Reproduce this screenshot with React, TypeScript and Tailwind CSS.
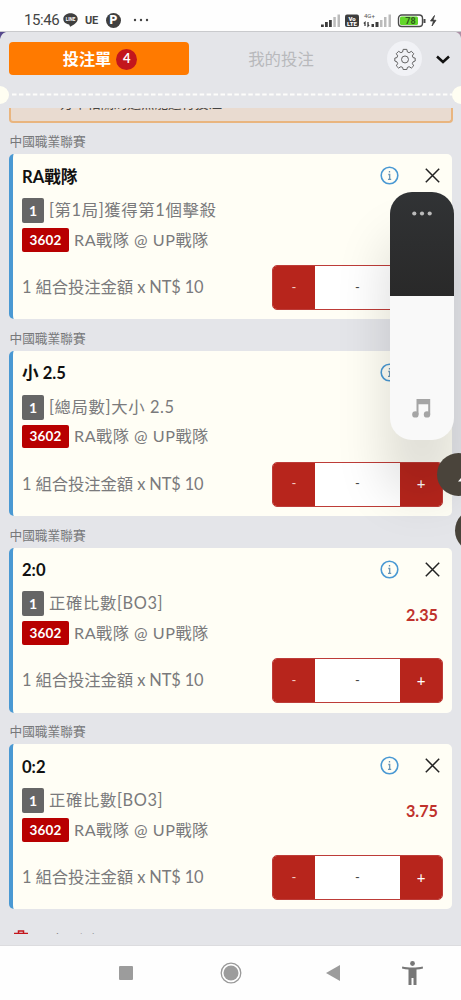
import { useState } from 'react'

interface Bet {
  id: number
  pick: string
  market: string
  odds?: string
}

const league = '中國職業聯賽'

const bets: Bet[] = [
  { id: 1, pick: 'RA戰隊', market: '[第1局]獲得第1個擊殺' },
  { id: 2, pick: '小 2.5', market: '[總局數]大小 2.5' },
  { id: 3, pick: '2:0', market: '正確比數[BO3]', odds: '2.35' },
  { id: 4, pick: '0:2', market: '正確比數[BO3]', odds: '3.75' },
]

function StatusBar() {
  return (
    <div className="flex h-8 shrink-0 items-center border-b border-[#c9cacd] bg-[#fefefe] pl-[24px] pt-[9px] font-['Roboto','Noto_Sans_CJK_TC',sans-serif] text-[#444]">
      <span className="w-[36px] text-[15px] leading-none tracking-[-0.4px]">15:46</span>
      <svg className="ml-[3px] h-[14px] w-[15px]" viewBox="0 0 15 14">
        <path d="M7.5 0.3C3.4 0.3 0.3 2.8 0.3 6c0 2.9 2.5 5 5.8 5.5L7.2 13.8C10.5 12 14.7 9.5 14.7 6c0-3.2-3.1-5.7-7.2-5.7z" fill="#3f3f3f" />
        <text x="7.5" y="7.8" textAnchor="middle" fontSize="4.5" fontWeight="700" fill="#fff">LINE</text>
      </svg>
      <span className="ml-[7px] w-[15px] text-[11px] font-bold leading-none tracking-[-0.3px]">UE</span>
      <span className="ml-[6px] flex h-[15px] w-[15px] items-center justify-center rounded-full bg-[#3f3f3f] text-[12px] font-black leading-none text-white">P</span>
      <svg className="ml-[12px] h-[4px] w-[16px]" viewBox="0 0 16 4" fill="#444">
        <circle cx="2" cy="2" r="1.2" />
        <circle cx="8" cy="2" r="1.2" />
        <circle cx="14" cy="2" r="1.2" />
      </svg>
      <svg className="ml-[171px] h-[16px] w-[120px]" viewBox="0 -2 120 16">
        <g fill="#3d3d3d">
          <rect x="1" y="10.5" width="2.8" height="2.5" />
          <rect x="5" y="8" width="2.8" height="5" />
          <rect x="9" y="6" width="2.8" height="7" />
        </g>
        <rect x="13.3" y="3" width="2.5" height="10" fill="#bbb" />
        <rect x="17.5" y="0.5" width="2.5" height="12.5" fill="#bbb" />
        <rect x="25" y="0.5" width="14" height="12.5" rx="2" fill="#3d3d3d" />
        <text x="32" y="6.5" textAnchor="middle" fontSize="6" fontWeight="900" fill="#fff">Vo</text>
        <text x="32" y="12.3" textAnchor="middle" fontSize="6" fontWeight="900" fill="#fff">LTE</text>
        <text x="44" y="4" fontSize="6" fill="#555">4G+</text>
        <path d="M45 12V8.500l-1.200 1M48 8v4l1.200-1" stroke="#3d3d3d" fill="none" strokeWidth="1.3" />
        <rect x="51.5" y="10" width="2.5" height="3" fill="#3d3d3d" />
        <rect x="55.5" y="8" width="3" height="5" fill="#3d3d3d" />
        <rect x="60" y="6" width="2.5" height="7" fill="#bbb" />
        <rect x="64" y="3" width="2.5" height="10" fill="#bbb" />
        <rect x="68.5" y="0.5" width="2.5" height="12.5" fill="#bbb" />
        <rect x="78.5" y="1" width="24" height="11.5" rx="3.2" fill="#fff" stroke="#4a4a4a" strokeWidth="1.4" />
        <rect x="80" y="2.5" width="18" height="8.5" rx="1.5" fill="#63d72b" />
        <rect x="103.5" y="5" width="2" height="4" fill="#4a4a4a" />
        <text x="90.5" y="10" textAnchor="middle" fontSize="9" fontWeight="700" fill="#2f5a1c">78</text>
        <path d="M114.500 1.500L110.500 7h3l-1.500 5L116 6.300h-3z" fill="#3d3d3d" stroke="#3d3d3d" strokeWidth="0.8" />
      </svg>
    </div>
  )
}

function Header() {
  return (
    <header className="flex h-[76px] shrink-0 flex-col">
      <div className="flex h-[53px] items-center pl-[9px]">
        <button className="flex h-[33px] w-[180px] items-center justify-center gap-[5px] rounded-[4px] bg-[#ff7a00] pl-[2px] pt-px text-[16.2px] font-bold text-white">
          投注單
          <span className="flex h-[21px] w-[21px] items-center justify-center rounded-full bg-[#c3161c] text-[13px] font-bold">4</span>
        </button>
        <button className="w-[184px] pt-[2px] text-[16.4px] text-[#b8b9bc]">我的投注</button>
        <div className="ml-[14px] flex h-[35px] w-[35px] items-center justify-center rounded-full bg-[#f1f2f6]">
          <svg className="h-[22px] w-[22px]" viewBox="0 0 24 24" fill="none" stroke="#555" strokeWidth="1" strokeLinejoin="round">
            <path d="M10 1.500h4l.6 2.800 1.900.8L19 3.600l2.500 2.600-1.500 2.400.8 1.900 2.300.5v3.200l-2.300.9-.8 1.900 1.500 2.400-2.500 2.500-2.500-1.500-1.900.8-.6 2.300h-4l-.6-2.300-1.900-.8L5 21.900l-2.500-2.500L4 17l-.8-1.900-2.300-.9V11l2.300-.5L4 8.600 2.500 6.200 5 3.600l2.500 1.500 1.900-.8z" />
            <circle cx="12" cy="12.5" r="3.8" />
          </svg>
        </div>
        <svg className="ml-[14px] mt-[2px] h-[9px] w-[14px]" viewBox="0 0 14 9" fill="none" stroke="#111" strokeWidth="2.5">
          <path d="M1 1.500l6 5.500 6-5.500" />
        </svg>
      </div>
      {/* ticket edge */}
      <div className="flex h-[19px] items-center justify-between overflow-hidden">
        <div className="h-[18px] w-[9px] rounded-r-full bg-[#fffef2]" />
        <svg className="h-[3px] w-[442px]" viewBox="0 0 442 3">
          <path d="M2 1.500h440" stroke="#fdfdfb" strokeWidth="2.2" strokeDasharray="4.5 2.45" />
        </svg>
        <div className="h-[18px] w-[9px] rounded-l-full bg-[#fffef2]" />
      </div>
    </header>
  )
}

function Stepper() {
  return (
    <div className="flex h-[45px] w-[171px] overflow-hidden rounded-[5px] border border-[#bd3c38] bg-white text-[13px]">
      <button className="w-[42px] bg-[#b7251c] text-[#f3c9c3]">-</button>
      <div className="flex flex-1 items-center justify-center text-[#444]">-</div>
      <button className="w-[42px] bg-[#b7251c] pb-px text-[15px] text-white">+</button>
    </div>
  )
}

function BetCard({ bet, onRemove }: { bet: Bet; onRemove: () => void }) {
  return (
    <section className="pt-[6.6px]">
      <div className="flex h-[25px] items-center pl-[9.5px] text-[12.7px] text-[#77787a]">{league}</div>
      <div className="ml-[9px] flex h-[165px] w-[443px] flex-col rounded-[5px] border-l-4 border-[#4a99d3] bg-[#fffef5] pl-[9px]">
        <div className="flex h-[110.5px] justify-between">
          <div className="flex flex-col">
            <h2 className="flex h-[43.5px] items-center pt-[2px] text-[16.6px] font-bold text-[#111]">{bet.pick}</h2>
            <div className="flex h-[25px] items-center gap-[5px]">
              <span className="flex h-[25px] w-[22px] items-center justify-center rounded-[2px] bg-[#666] text-[14px] font-bold text-white">1</span>
              <span className="text-[16.4px] tracking-[0.6px] text-[#7a7a7c]">{bet.market}</span>
            </div>
            <div className="mt-[5px] flex h-[24px] items-center gap-[5px]">
              <span className="flex h-[23.5px] w-[47px] items-center justify-center rounded-[2px] bg-[#b80000] text-[13.5px] font-bold tracking-[0.2px] text-white">3602</span>
              <span className="text-[16.2px] tracking-[0.5px] text-[#7a7a7c]">RA戰隊 @ UP戰隊</span>
            </div>
          </div>
          <div className="flex flex-col items-end">
            <div className="flex h-[43px] items-center gap-[26px] pr-[12px]">
              <svg className="h-[19px] w-[19px]" viewBox="0 0 19 19" fill="none" stroke="#4a99d3">
                <circle cx="9.5" cy="9.5" r="8.3" strokeWidth="1.6" />
                <path d="M9.500 5v1.600M8.300 8.500h1.400v4.500M8 13.300h3.200" strokeWidth="1.3" stroke="#6a94b3" />
              </svg>
              <button onClick={onRemove}>
                <svg className="h-[15px] w-[15px]" viewBox="0 0 15 15" stroke="#222" strokeWidth="1.5">
                  <path d="M0.800 0.800l13.400 13.400M14.200 0.800L0.800 14.200" />
                </svg>
              </button>
            </div>
            {bet.odds && (
              <span className="mt-[12px] pr-[14px] text-[16.2px] font-bold leading-[24px] text-[#c0322c]">{bet.odds}</span>
            )}
          </div>
        </div>
        <div className="flex h-[45px] items-center justify-between pr-[9px]">
          <span className="text-[16.4px] tracking-[-0.12px] text-[#7a7a7c]">1 組合投注金額 x NT$ 10</span>
          <Stepper />
        </div>
      </div>
    </section>
  )
}

function NavBar() {
  return (
    <nav className="flex h-[54px] shrink-0 items-center bg-[#fefefe] pl-[119px]">
      <div className="h-[14px] w-[14px] rounded-[1px] bg-[#9c9c9c]" />
      <svg className="ml-[87px] h-[22px] w-[22px]" viewBox="0 0 22 22">
        <circle cx="11" cy="11" r="9.8" fill="none" stroke="#999" strokeWidth="1.3" />
        <circle cx="11" cy="11" r="7.5" fill="#9c9c9c" />
      </svg>
      <svg className="ml-[84px] h-[16px] w-[14px]" viewBox="0 0 14 16">
        <path d="M14 0v16L0 8z" fill="#9c9c9c" />
      </svg>
      <svg className="ml-[62px] h-[24px] w-[21px]" viewBox="0 0 21 24" fill="#777">
        <circle cx="10.5" cy="2.5" r="2.4" />
        <path d="M0.300 5.500c6 1.300 14.400 1.300 20.400 0l.4 2c-2 .5-4.500.9-6.600 1V24h-3v-7h-2v7h-3V8.500c-2.100-.1-4.600-.5-6.600-1z" />
      </svg>
    </nav>
  )
}

function VolumePanel() {
  return (
    <div className="absolute left-[390px] top-[192px] flex h-[248px] w-[64px] flex-col overflow-hidden rounded-[22px] bg-[#f9f9f9] shadow-[0_50px_50px_5px_rgba(0,0,0,0.13)]">
      <div className="flex h-[104px] justify-center bg-linear-to-b from-[#313335] to-[#292929] pt-[19px]">
        <svg className="h-[5px] w-[20px]" viewBox="0 0 20 5" fill="#bbb">
          <circle cx="2.3" cy="2.5" r="2.1" />
          <circle cx="10" cy="2.5" r="2.1" />
          <circle cx="17.7" cy="2.5" r="2.1" />
        </svg>
      </div>
      <svg className="ml-[22px] mt-[102px] h-[20px] w-[19px]" viewBox="0 0 19 20" fill="#a5a5a5">
        <path d="M4.500 1h13.700v15.500h-2V6.200H6.500v10.300h-2z" />
        <circle cx="3.4" cy="16.4" r="3.2" />
        <circle cx="15" cy="16.4" r="3.2" />
      </svg>
    </div>
  )
}

export default function App() {
  const [items, setItems] = useState(bets)

  return (
    <div className="relative flex h-[1000px] w-[461px] flex-col overflow-hidden bg-[#e4e5e9] font-['Lato','Noto_Sans_CJK_TC',sans-serif]">
      <StatusBar />
      <Header />
      <main className="h-[826px] shrink-0 overflow-hidden">
        <div className="ml-[9px] flex h-[14.9px] w-[444px] rounded-b-[4px] border-2 border-t-0 border-[#e9b57f] bg-[#e9dbd0] pl-[49px]">
          <p className="-mt-[13px] whitespace-nowrap text-[13.5px] leading-[16px] text-[#444]">方串相關局選無能進行投注。</p>
        </div>
        {items.map((bet) => (
          <BetCard key={bet.id} bet={bet} onRemove={() => setItems(items.filter((b) => b.id !== bet.id))} />
        ))}
        <div className="mt-[21px] flex items-start gap-[10px] pl-[14px] text-[15px] text-[#77777a]">
          <svg className="h-[16px] w-[14px]" viewBox="0 0 14 16" fill="none" stroke="#c3161c" strokeWidth="1.5">
            <path d="M0 3.500h14M4.500 3V1h5v2M2 4l1 11h8l1-11" />
          </svg>
          <span className="leading-[20px]">全部刪除</span>
        </div>
      </main>
      <div className="h-[12px] shrink-0 border-b border-[#dcdcdf]" />
      <NavBar />

      {/* system overlays */}
      <VolumePanel />
      <div className="absolute left-[437px] top-[453px] flex h-[43px] w-[43px] items-center rounded-full bg-[#4a443b] pl-[20px]">
        <svg className="mt-[8px] h-[6px] w-[8px]" viewBox="0 0 8 6">
          <path d="M1 5.500L4 2v3.500z" fill="#fff" />
        </svg>
      </div>
      <div className="absolute left-[455px] top-[509px] h-[43px] w-[43px] rounded-full bg-[#48433a]" />
      <svg className="absolute left-0 top-[32px] h-[7px] w-[7px]" viewBox="0 0 7 7">
        <path d="M0 0h6C2.500 1 1 3.500 0 7z" fill="#55488c" />
      </svg>
      <svg className="absolute left-[456px] top-[32px] h-[6px] w-[5px]" viewBox="0 0 5 6">
        <path d="M0 0h5v6C4.500 3 3 1 0 0z" fill="#ab90a6" />
      </svg>
    </div>
  )
}
